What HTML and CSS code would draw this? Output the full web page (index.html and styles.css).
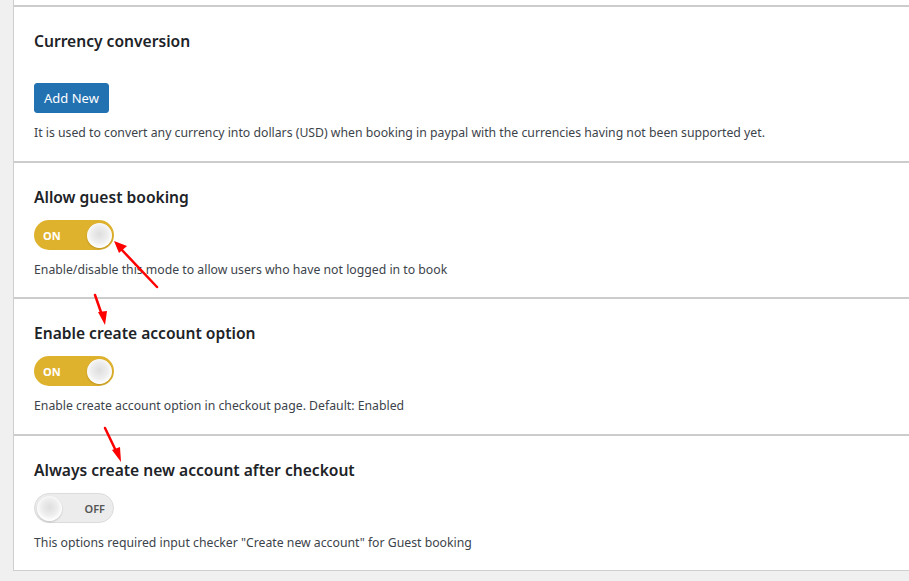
FILE: index.html
```html
<!DOCTYPE html>
<html lang="en">
<head>
    <meta charset="UTF-8">
    <meta name="viewport" content="width=device-width, initial-scale=1.0">
    <link rel="stylesheet" href="styles.css">
</head>
<body>
    <div class="settings-panel">
        <div class="panel-top"></div>

        <div class="setting-row setting-row-first">
            <h3>Currency conversion</h3>
            <button type="button" class="button-primary">Add New</button>
            <p class="description">It is used to convert any currency into dollars (USD) when booking in paypal with the currencies having not been supported yet.</p>
        </div>

        <div class="setting-row">
            <h3>Allow guest booking</h3>
            <label class="switch switch-on">
                <span class="switch-label">ON</span>
                <span class="switch-knob"></span>
            </label>
            <p class="description">Enable/disable this mode to allow users who have not logged in to book</p>
        </div>

        <div class="setting-row setting-row-tall">
            <h3>Enable create account option</h3>
            <label class="switch switch-on">
                <span class="switch-label">ON</span>
                <span class="switch-knob"></span>
            </label>
            <p class="description">Enable create account option in checkout page. Default: Enabled</p>
        </div>

        <div class="setting-row">
            <h3>Always create new account after checkout</h3>
            <label class="switch switch-off">
                <span class="switch-knob"></span>
                <span class="switch-label">OFF</span>
            </label>
            <p class="description">This options required input checker "Create new account" for Guest booking</p>
        </div>
    </div>

    <svg class="annotations" width="909" height="581" viewBox="0 0 909 581">
        <g stroke="#f00" stroke-width="2.5" stroke-linecap="round" fill="#f00">
            <line x1="157" y1="287" x2="121" y2="249"/>
            <polygon points="114,241 127,246 119,253" stroke="none"/>
            <line x1="95" y1="295" x2="102" y2="315"/>
            <polygon points="105,325 98,312 107,311" stroke="none"/>
            <line x1="105" y1="428" x2="116" y2="451"/>
            <polygon points="121,462 112,450 120,447" stroke="none"/>
        </g>
    </svg>
</body>
</html>
```

FILE: styles.css
```css
body {
    margin: 0;
    background: #f0f0f1;
    font-family: 'Noto Sans', 'Open Sans', sans-serif;
    color: #3c434a;
    position: relative;
}

.settings-panel {
    margin-left: 13px;
    background: #fff;
    border-left: 1px solid #cfcfcf;
    border-bottom: 1px solid #cfcfcf;
}

.panel-top {
    height: 5px;
}

.setting-row {
    border-top: 2px solid #cccccc;
    padding: 23px 20px 18px 20px;
}

.setting-row h3 {
    margin: 0;
    font-size: 15.6px;
    line-height: 23px;
    font-weight: 600;
    color: #1d2327;
}

.setting-row-first {
    padding-bottom: 19px;
}

.setting-row-tall {
    padding-bottom: 19px;
}

.button-primary {
    display: block;
    margin-top: 30px;
    height: 30px;
    padding: 0 9px;
    background: #2271b1;
    border: 1px solid #2271b1;
    border-radius: 3px;
    color: #fff;
    font-family: inherit;
    font-size: 13px;
    cursor: pointer;
}

.description {
    margin: 11px 0 0 0;
    font-size: 12.25px;
    line-height: 18px;
}

.switch {
    margin-top: 11px;
    width: 80px;
    height: 30px;
    box-sizing: border-box;
    border-radius: 15px;
    display: flex;
    align-items: center;
    justify-content: space-between;
    padding: 0 2px 0 9px;
    cursor: pointer;
}

.switch-on {
    background: #dfb22e;
}

.switch-off {
    background: #ececec;
    border: 1px solid #dcdcdc;
    padding: 0 8px 0 2px;
}

.switch-label {
    font-size: 11px;
    font-weight: 700;
    color: #fff;
}

.switch-off .switch-label {
    font-weight: 600;
    color: #555;
}

.switch-knob {
    width: 25px;
    height: 25px;
    border-radius: 50%;
    background: radial-gradient(circle at 50% 45%, #dedede 0%, #eeeeee 45%, #fff 72%);
    box-shadow: 0 1px 2px rgba(0, 0, 0, 0.18);
}

.annotations {
    position: absolute;
    top: 0;
    left: 0;
    pointer-events: none;
}
```
